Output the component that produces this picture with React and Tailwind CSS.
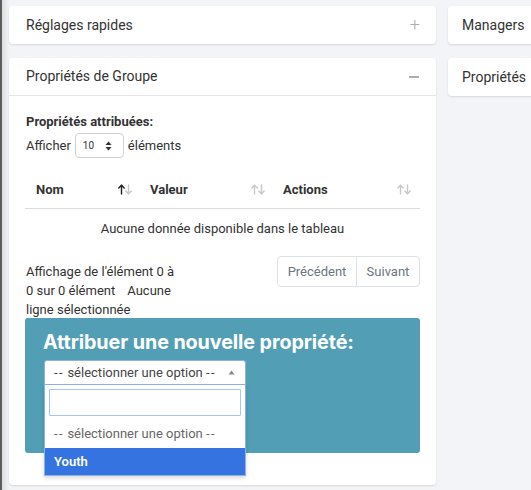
import React from "react";

function SortIcon({ active }) {
  return (
    <svg width="14" height="11" viewBox="0 0 14 11" fill="none" strokeWidth="1.4" strokeLinecap="round" strokeLinejoin="round">
      <g stroke={active ? "#222" : "#c8c8c8"}>
        <path d="M3.5 1.2 V10" />
        <path d="M0.8 3.9 L3.5 1.2 L6.2 3.9" />
      </g>
      <g stroke="#c8c8c8">
        <path d="M10.5 1 V9.8" />
        <path d="M7.8 7.1 L10.5 9.8 L13.2 7.1" />
      </g>
    </svg>
  );
}

function Dashes() {
  return <span className="tracking-[1.5px]">--</span>;
}

function Card({ title, icon, children }) {
  return (
    <div className="bg-white rounded-[4px] shadow-[0_1px_2px_rgba(0,0,0,0.12)]">
      <div className={"h-[38px] flex items-center justify-between pl-[17px] pr-[16px] " + (children ? "border-b border-[#e6e6e6]" : "")}>
        <span className="text-[14px] text-[#333]">{title}</span>
        {icon}
      </div>
      {children}
    </div>
  );
}

export default function App() {
  return (
    <div className="w-[531px] h-[490px] overflow-hidden flex bg-[#f3f4f8] text-[#333]" style={{ fontFamily: "Roboto, 'Noto Sans', sans-serif" }}>
      <div className="w-[2px] bg-[#5c5c5c] shrink-0" />
      <div className="w-[7px] shrink-0 bg-gradient-to-r from-[#dcdde0] to-[#f3f4f8]" />
      <div className="flex gap-[12px] pt-[6px]">
        <div className="w-[427px] shrink-0 flex flex-col gap-[14px]">
          <Card
            title="Réglages rapides"
            icon={<span className="text-[#a9acb3] text-[18px] leading-none font-light">+</span>}
          />
          <Card
            title="Propriétés de Groupe"
            icon={<span className="w-[10px] h-[2px] bg-[#a9acb3] mr-[1px]" />}
          >
            <div className="px-[16px] pt-[17px] pb-[32px] text-[13px]">
              <div className="font-bold pl-[1px] leading-[18px]">Propriétés attribuées:</div>
              <div className="flex items-center gap-[4px] mt-[2px] pl-[1px]">
                <span>Afficher</span>
                <div className="w-[49px] h-[25px] border border-[#cfd2d6] rounded-[4px] flex items-center justify-between pl-[7px] pr-[11px]">
                  <span className="text-[10px]">10</span>
                  <svg width="7" height="10" viewBox="0 0 7 10">
                    <path d="M3.5 0.5 L6.5 4 H0.5 Z" fill="#333" />
                    <path d="M3.5 9.5 L6.5 6 H0.5 Z" fill="#333" />
                  </svg>
                </div>
                <span>éléments</span>
              </div>
              <div className="mt-[13px]">
                <div className="flex h-[38px] items-center border-b border-[#dcdcdc] font-bold">
                  <div className="w-[115px] flex items-center justify-between pl-[11px] pr-[8px]">
                    <span>Nom</span>
                    <SortIcon active />
                  </div>
                  <div className="w-[133px] flex items-center justify-between pl-[10px] pr-[8px]">
                    <span>Valeur</span>
                    <SortIcon />
                  </div>
                  <div className="flex-1 flex items-center justify-between pl-[10px] pr-[9px]">
                    <span>Actions</span>
                    <SortIcon />
                  </div>
                </div>
                <div className="h-[40px] flex items-center justify-center">
                  Aucune donnée disponible dans le tableau
                </div>
              </div>
              <div className="flex justify-between items-start mt-[7px] h-[62px]">
                <div className="leading-[19px] pl-[1px] pt-[6px]">
                  <div>Affichage de l'élément 0 à</div>
                  <div>
                    0 sur 0 élément<span className="ml-[12px]">Aucune</span>
                  </div>
                  <div>ligne sélectionnée</div>
                </div>
                <div className="flex border border-[#dee2e6] rounded-[4px] h-[31px] text-[#6c757d]">
                  <div className="w-[79px] flex items-center justify-center border-r border-[#dee2e6]">Précédent</div>
                  <div className="w-[62px] flex items-center justify-center">Suivant</div>
                </div>
              </div>
              <div className="relative bg-[#529fb5] rounded-[3px] h-[135px] pl-[18px] pt-[11px]">
                <div className="text-white font-bold text-[19.75px] leading-[26px] tracking-[-0.1px]" style={{ fontFamily: "Inter, Roboto, sans-serif" }}>
                  Attribuer une nouvelle propriété:
                </div>
                <div className="absolute left-[19px] top-[42px] w-[202px]">
                  <div className="h-[25px] bg-white border border-[#8db3e8] rounded-t-[3px] flex items-center justify-between pl-[9px] pr-[10px]">
                    <span className="text-[#444] whitespace-nowrap">
                      <Dashes /> sélectionner une option <Dashes />
                    </span>
                    <svg width="7" height="5" viewBox="0 0 7 5">
                      <path d="M3.5 0.5 L6.5 4.5 H0.5 Z" fill="#888" />
                    </svg>
                  </div>
                  <div className="bg-white border border-t-0 border-[#8db3e8] shadow-[0_2px_4px_rgba(0,0,0,0.15)]">
                    <div className="p-[4px]">
                      <div className="h-[27px] border border-[#a9c5ec] rounded-[1px]" />
                    </div>
                    <div className="h-[28px] flex items-center pl-[9px] text-[#666]">
                      <span className="whitespace-nowrap">
                        <Dashes /> sélectionner une option <Dashes />
                      </span>
                    </div>
                    <div className="h-[27px] flex items-center pl-[9px] bg-[#3574e0] text-white font-semibold">
                      Youth
                    </div>
                  </div>
                </div>
              </div>
            </div>
          </Card>
        </div>
        <div className="w-[200px] shrink-0 flex flex-col gap-[14px]">
          <div className="bg-white rounded-[4px] shadow-[0_1px_2px_rgba(0,0,0,0.12)] h-[38px] flex items-center pl-[14px]">
            <span className="text-[14px] text-[#333]">Managers</span>
          </div>
          <div className="bg-white rounded-[4px] shadow-[0_1px_2px_rgba(0,0,0,0.12)] h-[38px] flex items-center pl-[14px]">
            <span className="text-[14px] text-[#333]">Propriétés</span>
          </div>
        </div>
      </div>
    </div>
  );
}
